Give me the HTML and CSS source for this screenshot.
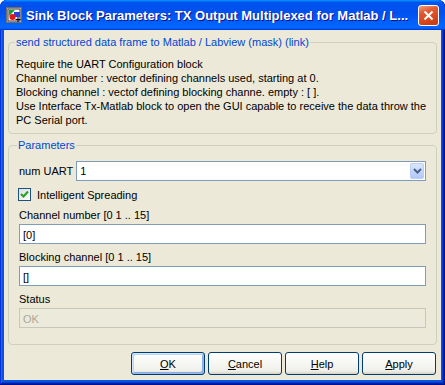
FILE: index.html
```html
<!DOCTYPE html>
<html lang="en">
<head>
	<meta charset="UTF-8">
	<title>Sink Block Parameters</title>
	<link rel="stylesheet" href="styles.css">
</head>
<body>
	<div class="window">
		<div class="titlebar">
			<svg class="app-icon" width="16" height="16" viewBox="0 0 16 16">
				<rect x="0.5" y="0.5" width="15" height="15" fill="#d4d0c8" stroke="#6d6d6d"/>
				<rect x="2" y="2" width="12" height="12" fill="#f4f4f4" stroke="#404040" stroke-width="1"/>
				<polygon points="3,3 9,3 3,9" fill="#18a02c"/>
				<rect x="8" y="5" width="6" height="5" fill="#2e3fe0"/>
				<circle cx="6.5" cy="10" r="3" fill="#e01818"/>
				<path d="M12 10 V15 M9.5 12.5 H14.5" stroke="#000" stroke-width="1"/>
			</svg>
			<span class="title">Sink Block Parameters: TX Output Multiplexed for Matlab / L...</span>
			<span class="close">
				<svg width="11" height="11" viewBox="0 0 11 11"><path d="M1.5 1.5 L9.5 9.5 M9.5 1.5 L1.5 9.5" stroke="#fff" stroke-width="2"/></svg>
			</span>
		</div>
		<div class="client">
			<fieldset class="group">
				<legend>send structured data frame to Matlab / Labview (mask) (link)</legend>
				<div class="desc">
					Require the UART Configuration block<br>
					Channel number : vector defining channels used, starting at 0.<br>
					Blocking channel : vectof defining blocking channe. empty : [ ].<br>
					Use Interface Tx-Matlab block to open the GUI capable to receive the data throw the<br>
					PC Serial port.
				</div>
			</fieldset>
			<fieldset class="group params">
				<legend>Parameters</legend>
				<div class="row">
					<label>num UART</label>
					<div class="combo">
						<span>1</span>
						<span class="drop"><svg width="9" height="6" viewBox="0 0 9 6"><path d="M1 1 L4.5 4.5 L8 1" fill="none" stroke="#4d6185" stroke-width="2"/></svg></span>
					</div>
				</div>
				<div class="check">
					<span class="box"><svg width="9" height="9" viewBox="0 0 9 9"><path d="M1 4 L3.5 6.5 L8 1.5" fill="none" stroke="#21a121" stroke-width="2"/></svg></span>
					<span>Intelligent Spreading</span>
				</div>
				<div class="field-label">Channel number [0 1 .. 15]</div>
				<div class="edit">[0]</div>
				<div class="field-label">Blocking channel [0 1 .. 15]</div>
				<div class="edit">[]</div>
				<div class="field-label">Status</div>
				<div class="edit disabled">OK</div>
			</fieldset>
			<div class="buttons">
				<button class="default"><u>O</u>K</button>
				<button><u>C</u>ancel</button>
				<button><u>H</u>elp</button>
				<button><u>A</u>pply</button>
			</div>
		</div>
	</div>
</body>
</html>
```

FILE: styles.css
```css
*{ margin: 0; padding: 0; box-sizing: border-box;}
body{ width: 445px; height: 385px; overflow: hidden; background: #fff; font-family: "Liberation Sans", Arial, sans-serif; font-size: 11px; color: #000;}
.window{ display: flex; flex-direction: column; width: 445px; height: 385px; border-radius: 7px 7px 0 0; overflow: hidden; background: #0855dd; box-shadow: inset -1px -1px #00138c, inset 1px 1px #0831d9, inset -2px -2px #001ea0, inset 2px 2px #166aee, inset -3px -3px #003bda, inset 3px 3px #0855dd;}
.titlebar{ display: flex; align-items: center; height: 30px; padding: 0 6px 0 6px; background: linear-gradient(180deg, #0997ff, #0053ee 8%, #0050ee 40%, #06f 88%, #06f 93%, #005bff 95%, #003dd7 96%, #003dd7); border-radius: 7px 7px 0 0;}
.app-icon{ flex: none; margin-right: 4px;}
.title{ flex: 1; color: #fff; font-weight: bold; font-size: 13px; white-space: nowrap; overflow: hidden; text-shadow: 1px 1px #0f1089;}
.close{ flex: none; display: flex; align-items: center; justify-content: center; width: 21px; height: 21px; margin-left: 4px; border: 1px solid #fff; border-radius: 3px; background: linear-gradient(160deg, #f0a080 0, #e35b32 30%, #d6451c 70%, #c23a14 100%);}
.client{ flex: 1; display: flex; flex-direction: column; margin: 0 4px 5px; padding: 5px 4px 0; background: #ece9d8;}
.group{ border: 1px solid #d0d0bf; border-radius: 4px; padding: 8px 7px 6px;}
.group legend{ padding: 0 1px; margin-left: -1px; color: #0046d5; line-height: 14px;}
.desc{ line-height: 14px;}
.params{ margin-top: 4px; padding: 9px 10px 16px 9px;}
.row{ display: flex; align-items: center;}
.row label{ padding: 0 3px 0 1px;}
.combo{ flex: 1; display: flex; align-items: center; justify-content: space-between; height: 20px; border: 1px solid #7f9db9; background: #fff; padding: 0 1px 0 3px;}
.drop{ display: flex; align-items: center; justify-content: center; width: 14px; height: 16px; border: 1px solid #b9cdf6; border-radius: 2px; background: linear-gradient(180deg, #dce7fd, #c1d3fb 60%, #b4c8f6);}
.check{ display: flex; align-items: center; margin-top: 7px;}
.box{ display: flex; align-items: center; justify-content: center; width: 13px; height: 13px; margin-right: 6px; border: 1px solid #1c5180; background: linear-gradient(135deg, #dcdcd7, #fff);}
.field-label{ margin-top: 6px; line-height: 14px; padding-left: 1px;}
.check + .field-label{ margin-top: 7px;}
.edit{ height: 20px; margin-top: 2px; margin-left: 1px; border: 1px solid #7f9db9; background: #fff; padding: 3px 3px 0; line-height: 14px;}
.edit.disabled{ border-color: #c9c7ba; background: #ebeadb; color: #aca899;}
.buttons{ display: flex; justify-content: flex-end; gap: 3px; margin-top: 7px; padding-right: 1px;}
button{ width: 74px; height: 23px; border: 1px solid #003c74; border-radius: 3px; background: linear-gradient(180deg, #fff, #f0f0ea 85%, #d6d0c5); font: inherit; color: #000;}
button.default{ box-shadow: inset 1px 1px #cee7ff, inset -1px -1px #98b8ea, inset 2px 2px #bcd4f6, inset -2px -2px #89ade4;}
```
